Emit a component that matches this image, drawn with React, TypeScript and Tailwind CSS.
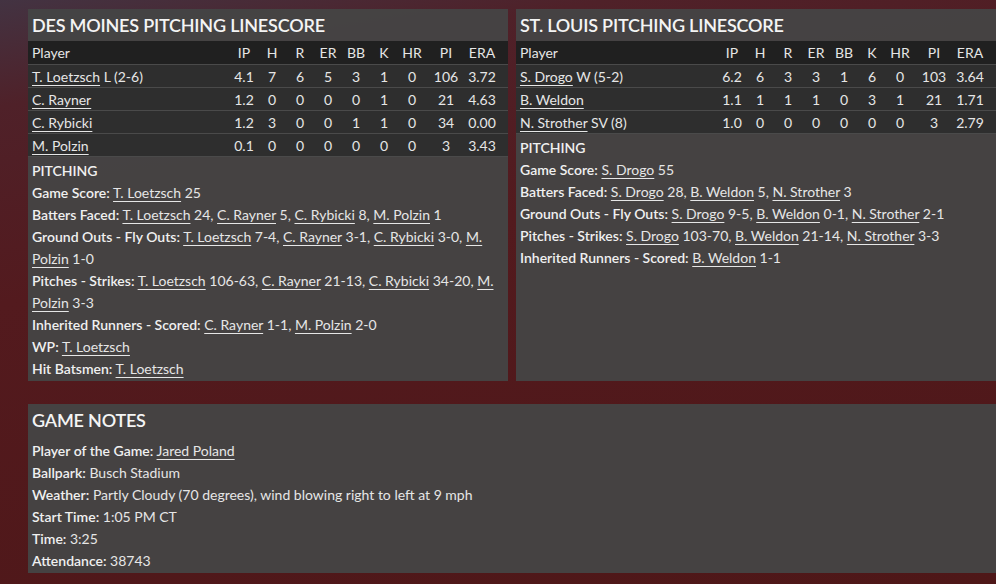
type Part = [string, string?];

interface Pitcher {
    name: string;
    note?: string;
    stats: string[];
}

interface Note {
    label: string;
    parts: Part[];
}

const COLS = ['IP', 'H', 'R', 'ER', 'BB', 'K', 'HR', 'PI', 'ERA'];
const COL_W = ['w-[28px]', 'w-[28px]', 'w-[28px]', 'w-[28px]', 'w-[28px]', 'w-[28px]', 'w-[28px]', 'w-[40px]', 'w-[32px]'];

const desMoines: Pitcher[] = [
    { name: 'T. Loetzsch', note: 'L (2-6)', stats: ['4.1', '7', '6', '5', '3', '1', '0', '106', '3.72'] },
    { name: 'C. Rayner', stats: ['1.2', '0', '0', '0', '0', '1', '0', '21', '4.63'] },
    { name: 'C. Rybicki', stats: ['1.2', '3', '0', '0', '1', '1', '0', '34', '0.00'] },
    { name: 'M. Polzin', stats: ['0.1', '0', '0', '0', '0', '0', '0', '3', '3.43'] }
];

const stLouis: Pitcher[] = [
    { name: 'S. Drogo', note: 'W (5-2)', stats: ['6.2', '6', '3', '3', '1', '6', '0', '103', '3.64'] },
    { name: 'B. Weldon', stats: ['1.1', '1', '1', '1', '0', '3', '1', '21', '1.71'] },
    { name: 'N. Strother', note: 'SV (8)', stats: ['1.0', '0', '0', '0', '0', '0', '0', '3', '2.79'] }
];

const desMoinesNotes: Note[] = [
    { label: 'Game Score:', parts: [['T. Loetzsch', '25']] },
    { label: 'Batters Faced:', parts: [['T. Loetzsch', '24'], ['C. Rayner', '5'], ['C. Rybicki', '8'], ['M. Polzin', '1']] },
    { label: 'Ground Outs - Fly Outs:', parts: [['T. Loetzsch', '7-4'], ['C. Rayner', '3-1'], ['C. Rybicki', '3-0'], ['M. Polzin', '1-0']] },
    { label: 'Pitches - Strikes:', parts: [['T. Loetzsch', '106-63'], ['C. Rayner', '21-13'], ['C. Rybicki', '34-20'], ['M. Polzin', '3-3']] },
    { label: 'Inherited Runners - Scored:', parts: [['C. Rayner', '1-1'], ['M. Polzin', '2-0']] },
    { label: 'WP:', parts: [['T. Loetzsch']] },
    { label: 'Hit Batsmen:', parts: [['T. Loetzsch']] }
];

const stLouisNotes: Note[] = [
    { label: 'Game Score:', parts: [['S. Drogo', '55']] },
    { label: 'Batters Faced:', parts: [['S. Drogo', '28'], ['B. Weldon', '5'], ['N. Strother', '3']] },
    { label: 'Ground Outs - Fly Outs:', parts: [['S. Drogo', '9-5'], ['B. Weldon', '0-1'], ['N. Strother', '2-1']] },
    { label: 'Pitches - Strikes:', parts: [['S. Drogo', '103-70'], ['B. Weldon', '21-14'], ['N. Strother', '3-3']] },
    { label: 'Inherited Runners - Scored:', parts: [['B. Weldon', '1-1']] }
];

const gameNotes: { label: string; value: string; link?: boolean }[] = [
    { label: 'Player of the Game:', value: 'Jared Poland', link: true },
    { label: 'Ballpark:', value: 'Busch Stadium' },
    { label: 'Weather:', value: 'Partly Cloudy (70 degrees), wind blowing right to left at 9 mph' },
    { label: 'Start Time:', value: '1:05 PM CT' },
    { label: 'Time:', value: '3:25' },
    { label: 'Attendance:', value: '38743' }
];

function PlayerLink({ children }: { children: string }) {
    return (
        <a href="#" className="underline decoration-1 underline-offset-[3px]">
            {children}
        </a>
    );
}

function NoteLine({ label, parts }: Note) {
    return (
        <div className="leading-[22px]">
            <span className="font-semibold text-[#f0f0f0]">{label}</span>{' '}
            {parts.map(([name, value], i) => (
                <span key={i}>
                    <PlayerLink>{name}</PlayerLink>
                    {value ? ` ${value}` : ''}
                    {i < parts.length - 1 ? ', ' : ''}
                </span>
            ))}
        </div>
    );
}

function Linescore({ title, pitchers, notes }: { title: string; pitchers: Pitcher[]; notes: Note[] }) {
    return (
        <div className="flex w-[480px] flex-col bg-[#454545]/95">
            <div className="flex h-[32px] items-center px-1 pt-[1px] text-[18px] font-semibold uppercase tracking-[-0.2px] text-[#f4f4f4]">
                {title}
            </div>
            <div className="flex h-[23px] items-center bg-[#202020] pl-1 pr-[10px]">
                <div className="flex-1">Player</div>
                {COLS.map((c, i) => (
                    <div key={c} className={`${COL_W[i]} text-center`}>{c}</div>
                ))}
            </div>
            {pitchers.map((p, idx) => (
                <div
                    key={p.name}
                    className={`flex h-[23px] items-center border-t border-[#4a4a4a] bg-[#2e2e2e] pl-1 pr-[10px] ${idx === pitchers.length - 1 ? 'h-[24px] border-b' : ''}`}>
                    <div className="flex-1">
                        <PlayerLink>{p.name}</PlayerLink>
                        {p.note ? ` ${p.note}` : ''}
                    </div>
                    {p.stats.map((s, i) => (
                        <div key={i} className={`${COL_W[i]} text-center`}>{s}</div>
                    ))}
                </div>
            ))}
            <div className="flex-1 px-1 pt-[3px]">
                <div className="font-semibold leading-[22px] text-[#f0f0f0]">PITCHING</div>
                {notes.map(n => (
                    <NoteLine key={n.label} {...n} />
                ))}
            </div>
        </div>
    );
}

export default function App() {
    return (
        <div
            className="h-[584px] w-[996px] overflow-hidden bg-[linear-gradient(170deg,#433342_0%,#4f2129_14%,#531a1e_40%,#4e1718_100%)] text-[14px] text-[#e6e6e6]"
            style={{ fontFamily: 'Lato, "Noto Sans", sans-serif' }}>
            <div className="flex flex-col gap-[23px] pl-[28px] pt-[9px]">
                <div className="flex h-[372px] gap-2">
                    <Linescore title="Des Moines Pitching Linescore" pitchers={desMoines} notes={desMoinesNotes} />
                    <Linescore title="St. Louis Pitching Linescore" pitchers={stLouis} notes={stLouisNotes} />
                </div>
                <div className="w-[968px] bg-[#454545]/95 px-1 pb-[1px]">
                    <div className="flex h-[32px] items-center pt-[1px] text-[18px] font-semibold uppercase tracking-[-0.2px] text-[#f4f4f4]">
                        Game Notes
                    </div>
                    <div className="pt-1">
                        {gameNotes.map(n => (
                            <div key={n.label} className="leading-[22px]">
                                <span className="font-semibold text-[#f0f0f0]">{n.label}</span>{' '}
                                {n.link ? <PlayerLink>{n.value}</PlayerLink> : n.value}
                            </div>
                        ))}
                    </div>
                </div>
            </div>
        </div>
    );
}
